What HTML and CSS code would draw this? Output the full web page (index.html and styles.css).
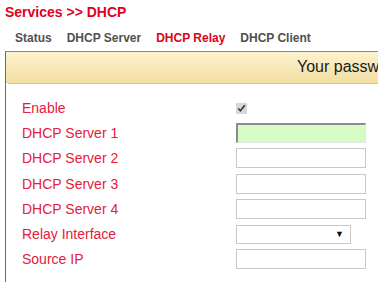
FILE: index.html
```html
<!DOCTYPE html>
<html lang="en">
<head>
  <meta charset="UTF-8" />
  <title>Services - DHCP Relay</title>
  <link rel="stylesheet" href="styles.css">
</head>
<body>
  <h1 class="title">Services &gt;&gt; DHCP</h1>

  <div class="tabs">
    <a class="tab">Status</a>
    <a class="tab">DHCP Server</a>
    <a class="tab active">DHCP Relay</a>
    <a class="tab">DHCP Client</a>
  </div>

  <div class="panel">
    <div class="notice">Your passw</div>

    <table class="form">
      <tr>
        <td class="label">Enable</td>
        <td><input type="checkbox" class="check" checked></td>
      </tr>
      <tr>
        <td class="label">DHCP Server 1</td>
        <td><input type="text" class="field focus"></td>
      </tr>
      <tr>
        <td class="label">DHCP Server 2</td>
        <td><input type="text" class="field"></td>
      </tr>
      <tr>
        <td class="label">DHCP Server 3</td>
        <td><input type="text" class="field"></td>
      </tr>
      <tr>
        <td class="label">DHCP Server 4</td>
        <td><input type="text" class="field"></td>
      </tr>
      <tr>
        <td class="label">Relay Interface</td>
        <td>
          <div class="select">
            <span class="arrow">&#9660;</span>
          </div>
        </td>
      </tr>
      <tr>
        <td class="label">Source IP</td>
        <td><input type="text" class="field"></td>
      </tr>
    </table>
  </div>
</body>
</html>
```

FILE: styles.css
```css
* {
  box-sizing: border-box;
}

body {
  margin: 0;
  padding: 4px 0 0 5px;
  font-family: 'Liberation Sans', Arial, sans-serif;
  background: #fff;
  overflow: hidden;
}

.title {
  margin: 0;
  font-size: 14px;
  font-weight: bold;
  color: #e2001a;
  line-height: 17px;
}

.tabs {
  display: flex;
  gap: 15px;
  padding: 9px 0 0 10px;
  height: 30px;
}

.tab {
  font-size: 12px;
  font-weight: bold;
  color: #505050;
  line-height: 16px;
}

.tab.active {
  color: #e2001a;
}

.panel {
  width: 373px;
  height: 231px;
  border-top: 1px solid #8a8a8a;
  border-left: 1px solid #6a6a6a;
}

.notice {
  height: 32px;
  line-height: 30px;
  padding-left: 291px;
  white-space: nowrap;
  overflow: hidden;
  font-size: 16px;
  color: #1a1a1a;
  background: linear-gradient(#fcf2cf, #f3dfa2);
  border-bottom: 1px solid #d9c27a;
  border-radius: 0 0 0 4px;
}

.form {
  border-collapse: collapse;
  margin: 11px 0 0 16px;
}

.form td {
  padding: 0;
  height: 25.3px;
}

.label {
  width: 214px;
  font-size: 14px;
  color: #e4203c;
}

.check {
  margin: 0;
  width: 11px;
  height: 11px;
  vertical-align: middle;
  accent-color: #d8d8d8;
}

.field {
  display: block;
  width: 130px;
  height: 20px;
  border: 1px solid #c8c8c8;
  background: #fff;
  padding: 0 3px;
}

.field.focus {
  background: #d7fcc3;
  border-top: 2px solid #8c8c8c;
  border-left: 2px solid #8c8c8c;
  border-right: 1px solid #e6e6e6;
  border-bottom: 1px solid #e6e6e6;
}

.select {
  display: flex;
  justify-content: flex-end;
  align-items: center;
  width: 115px;
  height: 19px;
  border: 1px solid #c8c8c8;
  padding-right: 6px;
}

.arrow {
  font-size: 9px;
  color: #111;
}
```
